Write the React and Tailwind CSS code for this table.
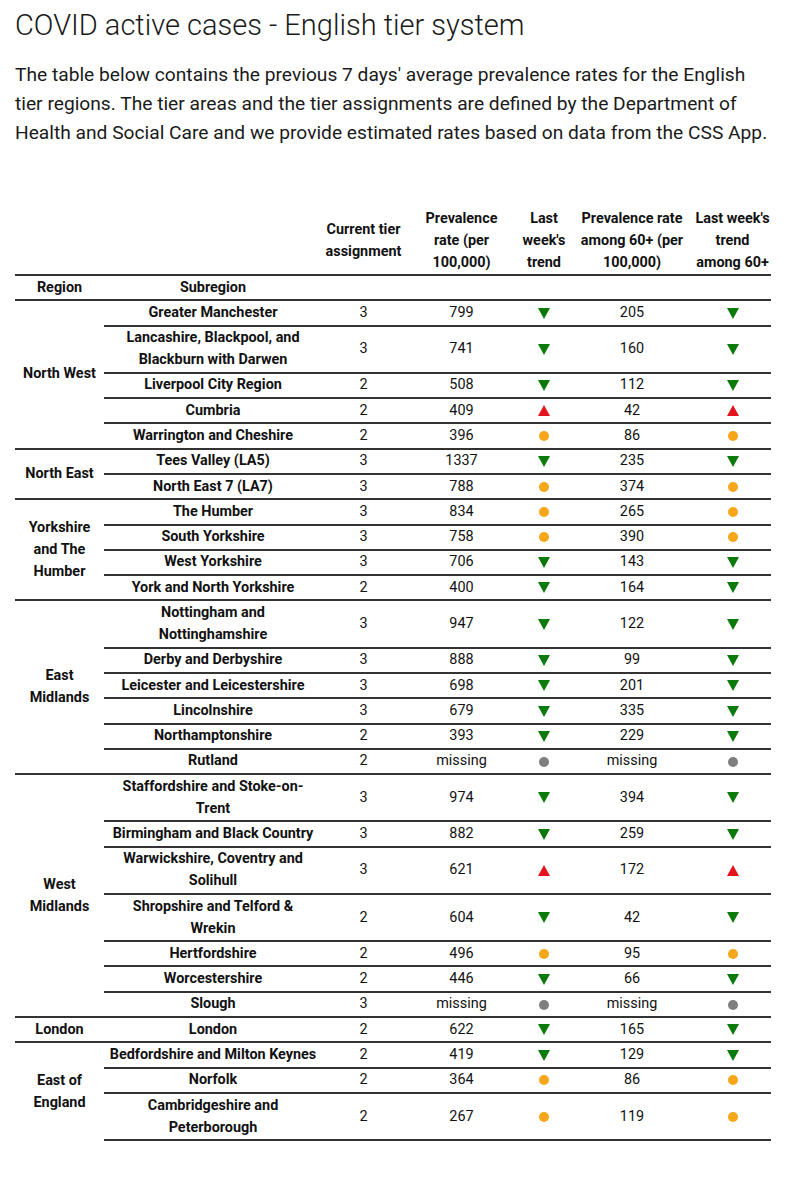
import React from 'react';

const groups = [
  {
    region: 'North West',
    rows: [
      ['Greater Manchester', 3, '799', 'down', '205', 'down'],
      ['Lancashire, Blackpool, and Blackburn with Darwen', 3, '741', 'down', '160', 'down'],
      ['Liverpool City Region', 2, '508', 'down', '112', 'down'],
      ['Cumbria', 2, '409', 'up', '42', 'up'],
      ['Warrington and Cheshire', 2, '396', 'flat', '86', 'flat'],
    ],
  },
  {
    region: 'North East',
    rows: [
      ['Tees Valley (LA5)', 3, '1337', 'down', '235', 'down'],
      ['North East 7 (LA7)', 3, '788', 'flat', '374', 'flat'],
    ],
  },
  {
    region: 'Yorkshire and The Humber',
    rows: [
      ['The Humber', 3, '834', 'flat', '265', 'flat'],
      ['South Yorkshire', 3, '758', 'flat', '390', 'flat'],
      ['West Yorkshire', 3, '706', 'down', '143', 'down'],
      ['York and North Yorkshire', 2, '400', 'down', '164', 'down'],
    ],
  },
  {
    region: 'East Midlands',
    rows: [
      ['Nottingham and Nottinghamshire', 3, '947', 'down', '122', 'down'],
      ['Derby and Derbyshire', 3, '888', 'down', '99', 'down'],
      ['Leicester and Leicestershire', 3, '698', 'down', '201', 'down'],
      ['Lincolnshire', 3, '679', 'down', '335', 'down'],
      ['Northamptonshire', 2, '393', 'down', '229', 'down'],
      ['Rutland', 2, 'missing', 'none', 'missing', 'none'],
    ],
  },
  {
    region: 'West Midlands',
    rows: [
      ['Staffordshire and Stoke-on-Trent', 3, '974', 'down', '394', 'down'],
      ['Birmingham and Black Country', 3, '882', 'down', '259', 'down'],
      ['Warwickshire, Coventry and Solihull', 3, '621', 'up', '172', 'up'],
      ['Shropshire and Telford & Wrekin', 2, '604', 'down', '42', 'down'],
      ['Hertfordshire', 2, '496', 'flat', '95', 'flat'],
      ['Worcestershire', 2, '446', 'down', '66', 'down'],
      ['Slough', 3, 'missing', 'none', 'missing', 'none'],
    ],
  },
  {
    region: 'London',
    rows: [['London', 2, '622', 'down', '165', 'down']],
  },
  {
    region: 'East of England',
    rows: [
      ['Bedfordshire and Milton Keynes', 2, '419', 'down', '129', 'down'],
      ['Norfolk', 2, '364', 'flat', '86', 'flat'],
      ['Cambridgeshire and Peterborough', 2, '267', 'flat', '119', 'flat'],
    ],
  },
];

function Trend({ kind }) {
  if (kind === 'down') {
    return (
      <svg width="12" height="11" viewBox="0 0 12 11" className="inline-block align-middle">
        <polygon points="0,0 12,0 6,11" fill="#0b7a0b" />
      </svg>
    );
  }
  if (kind === 'up') {
    return (
      <svg width="12" height="11" viewBox="0 0 12 11" className="inline-block align-middle">
        <polygon points="6,0 12,11 0,11" fill="#e5131b" />
      </svg>
    );
  }
  return (
    <span
      className={
        'inline-block w-[10px] h-[10px] rounded-full align-middle ' +
        (kind === 'flat' ? 'bg-[#f5a619]' : 'bg-[#7f7f7f]')
      }
    />
  );
}

const cell = 'border-t-2 border-[#333] py-[0.65px] px-0 leading-[22px] text-center align-middle';

export default function App() {
  return (
    <div className="bg-white text-[#1a1a1a] px-[15px] pt-[5px] pb-[60px] w-[791px]" style={{ fontFamily: 'Roboto, "Liberation Sans", sans-serif' }}>
      <h1 className="text-[29px] font-light leading-[40px]">COVID active cases - English tier system</h1>
      <p className="mt-[15px] text-[19.2px] leading-[29px] text-[#1a1a1a]">
        The table below contains the previous 7 days' average prevalence rates for the English tier regions. The tier
        areas and the tier assignments are defined by the Department of Health and Social Care and we provide estimated
        rates based on data from the CSS App.
      </p>

      <table className="mt-[61px] w-[756px] table-fixed border-separate border-spacing-0 text-[14.4px] text-[#111]">
        <colgroup>
          <col className="w-[89px]" />
          <col className="w-[218px]" />
          <col className="w-[83px]" />
          <col className="w-[113px]" />
          <col className="w-[52px]" />
          <col className="w-[124px]" />
          <col className="w-[77px]" />
        </colgroup>
        <thead>
          <tr className="font-bold leading-[22px]">
            <th />
            <th />
            <th className="align-middle">Current tier assignment</th>
            <th className="align-middle px-[14px]">Prevalence rate (per 100,000)</th>
            <th className="align-middle">Last week's trend</th>
            <th className="align-middle">Prevalence rate among 60+ (per 100,000)</th>
            <th className="align-middle">Last week's trend among 60+</th>
          </tr>
          <tr className="font-bold">
            <th className={cell}>Region</th>
            <th className={cell}>Subregion</th>
            <th className={cell} />
            <th className={cell} />
            <th className={cell} />
            <th className={cell} />
            <th className={cell} />
          </tr>
        </thead>
        <tbody>
          {groups.map((g, gi) =>
            g.rows.map((r, ri) => {
              const last = gi === groups.length - 1 && ri === g.rows.length - 1;
              const c = cell + (last ? ' border-b-2' : '');
              return (
                <tr key={g.region + ri}>
                  {ri === 0 && (
                    <td rowSpan={g.rows.length} className={cell + ' font-bold px-[5px]'}>
                      {g.region}
                    </td>
                  )}
                  <td className={c + ' font-bold px-[4.8px]'}>{r[0]}</td>
                  <td className={c}>{r[1]}</td>
                  <td className={c}>{r[2]}</td>
                  <td className={c}>
                    <Trend kind={r[3]} />
                  </td>
                  <td className={c}>{r[4]}</td>
                  <td className={c}>
                    <Trend kind={r[5]} />
                  </td>
                </tr>
              );
            })
          )}
        </tbody>
      </table>
    </div>
  );
}
